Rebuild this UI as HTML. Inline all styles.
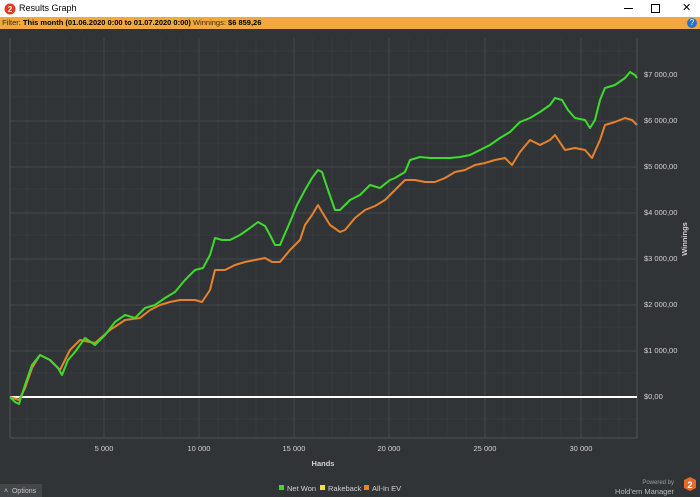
<!DOCTYPE html>
<html><head><meta charset="utf-8"><style>
body{margin:0;width:700px;height:497px;overflow:hidden;background:#313437;font-family:"Liberation Sans",sans-serif;}
.title{position:absolute;left:0;top:0;width:700px;height:17px;background:#fff;font-size:9px;color:#000;}
.filt{position:absolute;left:0;top:17px;width:700px;height:12px;background:#f1a93c;font-size:7.5px;line-height:12px;color:#3a2a10;}
</style></head><body>
<div class="title">
<svg width="12" height="12" style="position:absolute;left:4px;top:3px"><circle cx="6" cy="6" r="5.5" fill="#e03a22"/><text x="6" y="9" font-size="8" fill="#fff" text-anchor="middle" font-weight="bold" font-family="Liberation Sans">2</text></svg>
<span style="position:absolute;left:19px;top:3px">Results Graph</span>
<span style="position:absolute;left:624px;top:8px;width:9px;height:1px;background:#000"></span>
<span style="position:absolute;left:651px;top:4px;width:7px;height:7px;border:1px solid #000"></span>
<span style="position:absolute;left:682px;top:1px;font-size:11px">✕</span>
</div>
<div class="filt">&nbsp;Filter: <b style="color:#000">This month (01.06.2020 0:00 to 01.07.2020 0:00)</b> Winnings: <b style="color:#000">$6 859,26</b>
<span style="position:absolute;right:3px;top:1px;width:10px;height:10px;border-radius:50%;background:#2a6fd0;color:#fff;font-size:8px;text-align:center;line-height:10px">?</span></div>
<svg width="700" height="468" style="position:absolute;left:0;top:29px" font-family="Liberation Sans">
<g stroke="#373a3d" stroke-width="1">
<line x1="10" y1="22" x2="637" y2="22"/><line x1="10" y1="68" x2="637" y2="68"/><line x1="10" y1="114" x2="637" y2="114"/><line x1="10" y1="160" x2="637" y2="160"/><line x1="10" y1="206" x2="637" y2="206"/><line x1="10" y1="252" x2="637" y2="252"/><line x1="10" y1="298" x2="637" y2="298"/><line x1="10" y1="344" x2="637" y2="344"/><line x1="10" y1="390" x2="637" y2="390"/>
<line x1="27" y1="9" x2="27" y2="409"/><line x1="46" y1="9" x2="46" y2="409"/><line x1="65" y1="9" x2="65" y2="409"/><line x1="84" y1="9" x2="84" y2="409"/><line x1="123" y1="9" x2="123" y2="409"/><line x1="142" y1="9" x2="142" y2="409"/><line x1="161" y1="9" x2="161" y2="409"/><line x1="180" y1="9" x2="180" y2="409"/><line x1="218" y1="9" x2="218" y2="409"/><line x1="237" y1="9" x2="237" y2="409"/><line x1="256" y1="9" x2="256" y2="409"/><line x1="275" y1="9" x2="275" y2="409"/><line x1="313" y1="9" x2="313" y2="409"/><line x1="332" y1="9" x2="332" y2="409"/><line x1="351" y1="9" x2="351" y2="409"/><line x1="370" y1="9" x2="370" y2="409"/><line x1="409" y1="9" x2="409" y2="409"/><line x1="428" y1="9" x2="428" y2="409"/><line x1="447" y1="9" x2="447" y2="409"/><line x1="466" y1="9" x2="466" y2="409"/><line x1="504" y1="9" x2="504" y2="409"/><line x1="523" y1="9" x2="523" y2="409"/><line x1="542" y1="9" x2="542" y2="409"/><line x1="561" y1="9" x2="561" y2="409"/><line x1="600" y1="9" x2="600" y2="409"/><line x1="619" y1="9" x2="619" y2="409"/>
</g>
<g stroke="#43474a" stroke-width="1">
<line x1="104" y1="9" x2="104" y2="409"/><line x1="199" y1="9" x2="199" y2="409"/><line x1="294" y1="9" x2="294" y2="409"/><line x1="389" y1="9" x2="389" y2="409"/><line x1="485" y1="9" x2="485" y2="409"/><line x1="581" y1="9" x2="581" y2="409"/>
<line x1="10" y1="322" x2="637" y2="322"/><line x1="10" y1="276" x2="637" y2="276"/><line x1="10" y1="230" x2="637" y2="230"/><line x1="10" y1="184" x2="637" y2="184"/><line x1="10" y1="138" x2="637" y2="138"/><line x1="10" y1="92" x2="637" y2="92"/><line x1="10" y1="46" x2="637" y2="46"/>
</g>
<g stroke="#4f5357" stroke-width="1"><line x1="10" y1="9" x2="10" y2="409"/><line x1="637" y1="9" x2="637" y2="409"/><line x1="10" y1="409" x2="637" y2="409"/></g>
<line x1="10" y1="368" x2="637" y2="368" stroke="#fff" stroke-width="2"/>
<g transform="translate(0,-29)" fill="none" stroke-width="2" stroke-linejoin="round">
<polyline stroke="#e8822a" points="10,397 19,400 25,388 32,368 40,355 50,360 60,370 70,350 80,340 95,343 110,330 125,320 140,318 150,310 160,305 170,302 180,300 195,300 202,302 210,290 215,270 225,270 235,265 245,262 255,260 265,258 272,262 280,262 290,250 300,240 305,225 312,215 318,205 322,212 330,225 340,232 345,230 355,218 365,210 375,206 385,200 395,190 405,180 415,180 425,182 435,182 445,178 455,172 465,170 475,165 485,163 495,160 505,158 512,165 520,152 530,140 540,145 550,140 555,135 565,150 575,148 585,150 592,158 600,140 605,125 615,122 625,118 632,120 637,125"/>
<polyline stroke="#3ddc2c" points="10,397 15,402 19,404 25,385 32,365 40,355 50,360 58,368 62,375 68,360 75,352 85,338 95,345 105,335 115,322 125,315 135,318 145,308 155,305 165,298 175,292 185,280 195,270 203,268 210,255 215,238 222,240 230,240 240,235 250,228 258,222 265,226 270,235 275,245 280,245 290,222 297,205 305,190 312,178 318,170 322,172 328,190 335,210 340,210 350,200 360,195 370,185 380,188 390,180 395,178 405,172 410,160 420,157 430,158 440,158 450,158 460,157 470,155 480,150 490,145 500,138 510,132 520,122 530,118 540,112 550,105 555,98 562,100 568,110 575,118 585,120 590,128 595,120 600,100 605,88 615,85 625,78 630,72 635,75 637,78"/>
</g>
<g fill="#d0d2d4" font-size="7.5">
<text x="644" y="48">$7 000,00</text><text x="644" y="94">$6 000,00</text><text x="644" y="140">$5 000,00</text><text x="644" y="186">$4 000,00</text><text x="644" y="232">$3 000,00</text><text x="644" y="278">$2 000,00</text><text x="644" y="324">$1 000,00</text><text x="644" y="370">$0,00</text>
<g text-anchor="middle"><text x="104" y="422">5 000</text><text x="199" y="422">10 000</text><text x="294" y="422">15 000</text><text x="389" y="422">20 000</text><text x="485" y="422">25 000</text><text x="581" y="422">30 000</text></g>
<text x="323" y="437" text-anchor="middle" font-weight="bold">Hands</text>
<text transform="translate(687,210) rotate(-90)" text-anchor="middle" font-weight="bold">Winnings</text>
<rect x="279" y="456" width="5" height="5" fill="#3ddc2c"/><text x="287" y="462">Net Won</text>
<rect x="320" y="456" width="5" height="5" fill="#f0e040"/><text x="328" y="462">Rakeback</text>
<rect x="364" y="456" width="5" height="5" fill="#e8822a"/><text x="372" y="462">All-In EV</text>
<text x="674" y="455" font-size="6" fill="#9a9ea2" text-anchor="end">Powered by</text>
<text x="674" y="465" fill="#b8bcc0" text-anchor="end">Hold'em Manager</text>
</g>
<polygon points="684,451 690,448 696,451 696,459 690,462 684,459" fill="#e86a2a"/>
<text x="690" y="459" font-size="9" fill="#fff" text-anchor="middle" font-weight="bold">2</text>
<rect x="0" y="455" width="42" height="13" fill="#43474b"/>
<text x="4" y="464" font-size="7" fill="#c8cacc">˄&#160;&#160;Options</text>
</svg>
</body></html>
